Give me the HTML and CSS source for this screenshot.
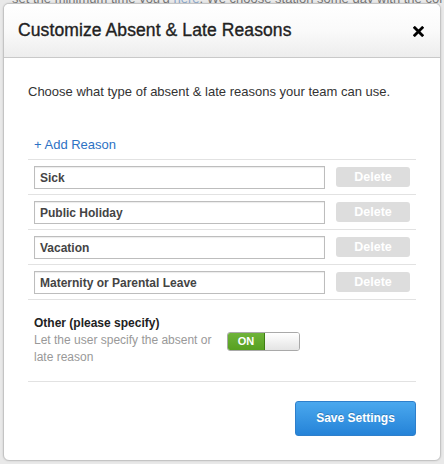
FILE: index.html
```html
<!DOCTYPE html>
<html>
<head>
<meta charset="utf-8">
<link rel="stylesheet" href="styles.css">
</head>
<body>
<div class="backdrop">
  <div class="bg-text">set the minimum time you'd <span class="bg-link">here</span>. We choose station some day with the con</div>
  <div class="modal">
    <div class="modal-header">
      <h1 class="modal-title">Customize Absent &amp; Late Reasons</h1>
      <span class="close">
        <svg width="11" height="11" viewBox="0 0 11 11"><path d="M1.8 1.8 L9.2 9.2 M9.2 1.8 L1.8 9.2" stroke="#000" stroke-width="2.8" stroke-linecap="square"/></svg>
      </span>
    </div>
    <div class="modal-body">
      <p class="intro">Choose what type of absent &amp; late reasons your team can use.</p>
      <div class="reasons">
        <a class="add-link">+ Add Reason</a>
        <div class="reason-row"><div class="reason-input">Sick</div><span class="btn-delete">Delete</span></div>
        <div class="reason-row"><div class="reason-input">Public Holiday</div><span class="btn-delete">Delete</span></div>
        <div class="reason-row"><div class="reason-input">Vacation</div><span class="btn-delete">Delete</span></div>
        <div class="reason-row"><div class="reason-input">Maternity or Parental Leave</div><span class="btn-delete">Delete</span></div>
      </div>
      <div class="other">
        <div class="other-text">
          <div class="other-title">Other (please specify)</div>
          <div class="other-desc">Let the user specify the absent or late reason</div>
        </div>
        <div class="toggle"><span class="toggle-on">ON</span><span class="toggle-off"></span></div>
      </div>
      <div class="footer">
        <span class="btn-save">Save Settings</span>
      </div>
    </div>
  </div>
</div>
</body>
</html>
```
FILE: styles.css
```css
* { box-sizing: border-box; }
html, body { margin: 0; padding: 0; }
body {
  width: 444px;
  height: 464px;
  overflow: hidden;
  background: #e9e9e9;
  font-family: "Liberation Sans", Arial, Helvetica, sans-serif;
  color: #333;
}
.backdrop {
  position: relative;
  width: 444px;
  height: 464px;
  padding: 3px 3px 3px 3px;
}
.bg-text {
  position: absolute;
  left: 12px;
  top: -9px;
  font-size: 13px;
  color: #777;
  white-space: nowrap;
}
.bg-link { color: #8aa7cc; }
.modal {
  position: relative;
  height: 458px;
  background: #fff;
  border: 1px solid #c4c4c4;
  border-radius: 6px;
  box-shadow: 0 0 2px rgba(0,0,0,0.15);
  overflow: hidden;
}
.modal-header {
  height: 54px;
  display: flex;
  align-items: center;
  justify-content: space-between;
  padding: 0 16px 1px 14px;
  background: linear-gradient(#ffffff 0%, #fafafa 50%, #ededed 100%);
  border-bottom: 1px solid #c9c9c9;
}
.modal-title {
  margin: 0;
  font-size: 17.5px;
  font-weight: normal;
  color: #222;
  letter-spacing: 0.1px;
  -webkit-text-stroke: 0.35px #222;
}
.close { display: flex; width: 11px; height: 11px; margin-top: 2px; }
.modal-body { padding: 0 24px 0 24px; }
.intro {
  margin: 0;
  padding: 26px 0 0 0;
  height: 79px;
  font-size: 13px;
  color: #333;
}
.add-link {
  display: block;
  color: #2d72c4;
  font-size: 13px;
  padding: 0 0 6px 6px;
  height: 23px;
  border-bottom: 1px solid #e2e2e2;
}
.reason-row {
  display: flex;
  align-items: center;
  height: 35px;
  padding: 0 6px;
  gap: 11px;
  border-bottom: 1px solid #e2e2e2;
}
.reason-input {
  width: 291px;
  height: 23px;
  border: 1px solid #bdbdbd;
  box-shadow: inset 0 1px 1px rgba(0,0,0,0.08);
  font-size: 12px;
  font-weight: bold;
  color: #444;
  padding: 4px 0 0 5px;
}
.btn-delete {
  width: 74px;
  height: 20px;
  border-radius: 3px;
  background: #dddddd;
  color: #fff;
  font-size: 12.5px;
  font-weight: bold;
  text-align: center;
  line-height: 20px;
}
.other {
  display: flex;
  align-items: flex-start;
  padding: 15px 6px 0 6px;
  height: 82px;
  border-bottom: 1px solid #e2e2e2;
}
.other-text { width: 193px; }
.other-title { font-size: 12px; font-weight: bold; color: #222; line-height: 17px; }
.other-desc { font-size: 12px; color: #999; line-height: 17px; }
.toggle {
  display: flex;
  margin-top: 17px;
  width: 73px;
  height: 19px;
  border: 1px solid #a9a9a9;
  border-radius: 3px;
  overflow: hidden;
}
.toggle-on {
  width: 37px;
  background: linear-gradient(#6fb33a, #56a020);
  color: #fff;
  font-size: 11px;
  font-weight: bold;
  text-align: center;
  line-height: 17px;
  border-right: 1px solid #3f7d13;
}
.toggle-off {
  flex: 1;
  background: linear-gradient(#ffffff, #e4e4e4);
}
.footer {
  display: flex;
  justify-content: flex-end;
  padding-top: 19px;
}
.btn-save {
  width: 121px;
  height: 35px;
  border-radius: 3px;
  border: 1px solid #2e7fcb;
  background: linear-gradient(#4aa8ee, #2583d8);
  color: #fff;
  font-size: 12px;
  font-weight: bold;
  text-align: center;
  line-height: 33px;
  text-shadow: 0 -1px 0 rgba(0,0,0,0.2);
}
```
